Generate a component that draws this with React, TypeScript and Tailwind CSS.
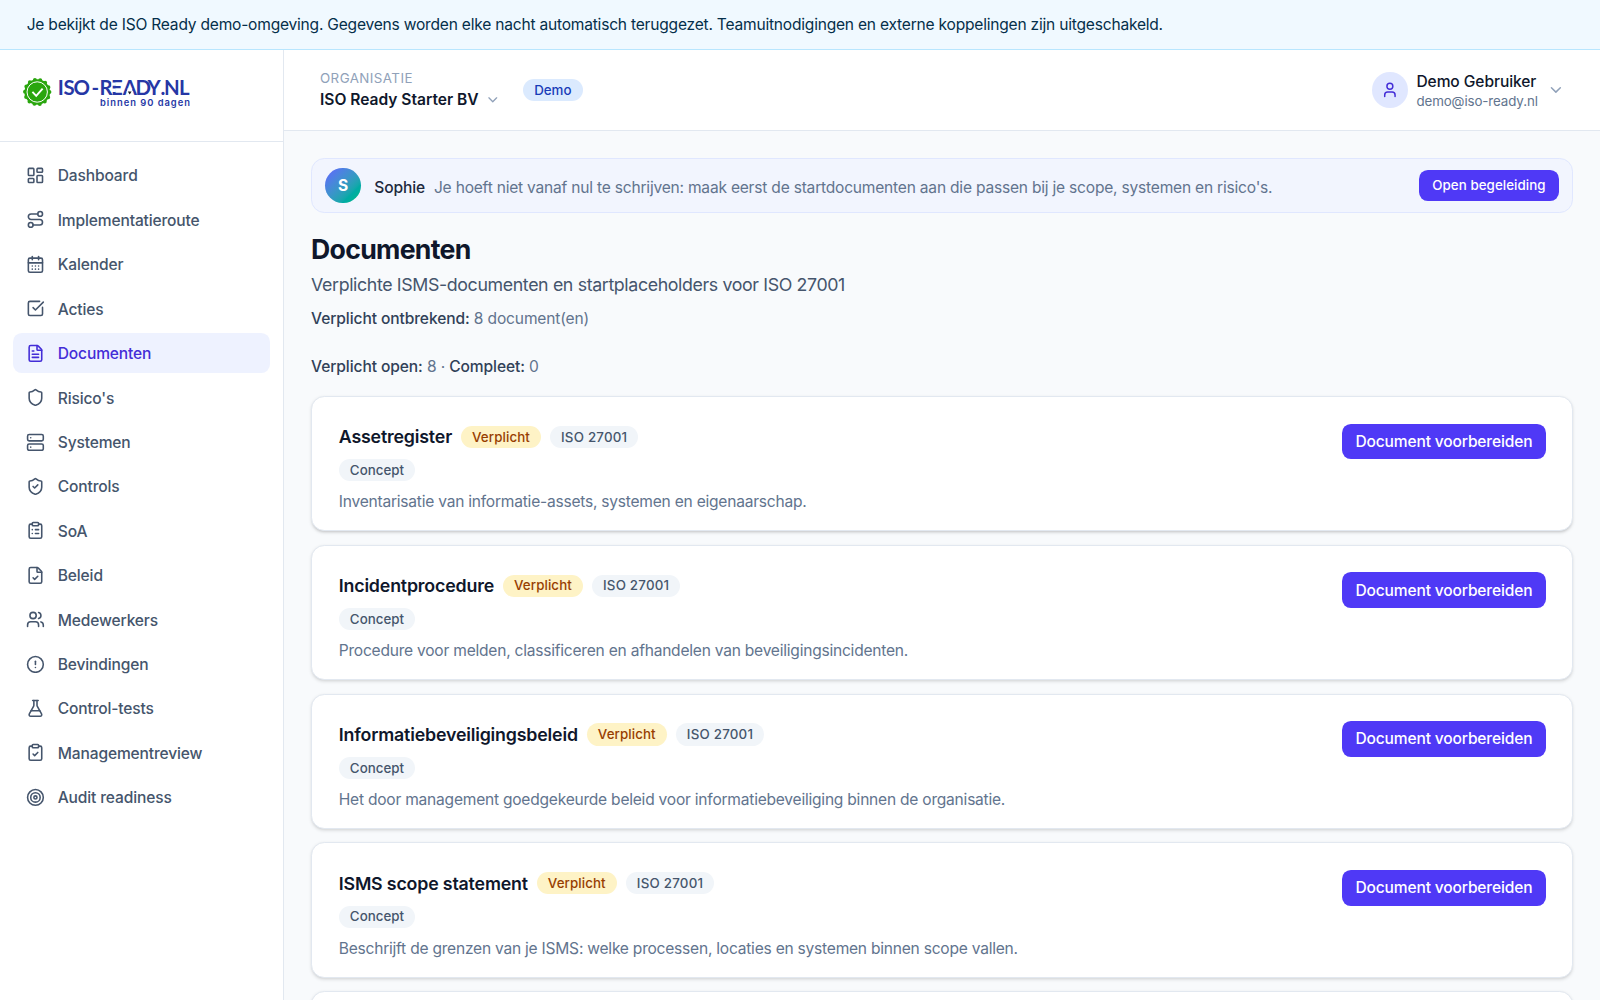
import React from 'react';
import {
  ChevronDown,
  CircleAlert,
  CalendarDays,
  ClipboardCheck,
  ClipboardList,
  FileCheck,
  FileText,
  FlaskConical,
  LayoutDashboard,
  Route,
  Server,
  Shield,
  ShieldCheck,
  SquareCheckBig,
  Target,
  User,
  Users,
} from 'lucide-react';

const navItems = [
  { label: 'Dashboard', icon: LayoutDashboard },
  { label: 'Implementatieroute', icon: Route },
  { label: 'Kalender', icon: CalendarDays },
  { label: 'Acties', icon: SquareCheckBig },
  { label: 'Documenten', icon: FileText, active: true },
  { label: "Risico's", icon: Shield },
  { label: 'Systemen', icon: Server },
  { label: 'Controls', icon: ShieldCheck },
  { label: 'SoA', icon: ClipboardList },
  { label: 'Beleid', icon: FileCheck },
  { label: 'Medewerkers', icon: Users },
  { label: 'Bevindingen', icon: CircleAlert },
  { label: 'Control-tests', icon: FlaskConical },
  { label: 'Managementreview', icon: ClipboardCheck },
  { label: 'Audit readiness', icon: Target },
];

const documents = [
  { title: 'Assetregister', description: 'Inventarisatie van informatie-assets, systemen en eigenaarschap.' },
  { title: 'Incidentprocedure', description: 'Procedure voor melden, classificeren en afhandelen van beveiligingsincidenten.' },
  { title: 'Informatiebeveiligingsbeleid', description: 'Het door management goedgekeurde beleid voor informatiebeveiliging binnen de organisatie.' },
  { title: 'ISMS scope statement', description: 'Beschrijft de grenzen van je ISMS: welke processen, locaties en systemen binnen scope vallen.' },
];

const Logo: React.FC = () => (
  <svg width="162" height="43.2" viewBox="0 -6 180 48" aria-label="ISO-READY.NL">
    {/* Seal */}
    <circle cx="15.2" cy="15" r="12.2" fill="none" stroke="#2aa60e" strokeWidth="4" strokeDasharray="0 5.475" strokeLinecap="round" />
    <circle cx="15.2" cy="15" r="12.8" fill="#2aa60e" />
    <circle cx="15.2" cy="15" r="10.2" fill="none" stroke="#fff" strokeWidth="1" />
    <path d="M10.4 14.8l3.8 4 6.4-7.2" fill="none" stroke="#fff" strokeWidth="1.9" />
    <text
      x="35.8 41.4 51.6 69.6 77.4 88.9 100.7 113.6 125.6 138.6 142 157"
      y="17.6"
      fontFamily="Lato"
      fontWeight="700"
      fontSize="20.4"
      fill="#2637a5"
    >
      ISO-READY.NL
    </text>
    {/* Open strokes of the E and A */}
    <path d="M89.5 5.6h4.4v3.1h-4.4zM89.5 11.4h4.4v3.6h-4.4z" fill="#fff" />
    <path d="M105.6 11.6h4.4l.9 3.6h-6.4z" fill="#fff" />
    <path d="M105.8 14.6h3.8l-1.9 2.8z" fill="#1c1c1c" />
    <text x="78" y="29.4" textLength="90" fontFamily="Inter" fontWeight="600" fontSize="9.4" fill="#2637a5">
      binnen 90 dagen
    </text>
  </svg>
);

const Badge: React.FC<{ className: string; children: React.ReactNode }> = ({ className, children }) => (
  <span className={`inline-flex h-5 items-center rounded-full px-2.5 pt-px text-xs font-medium ${className}`}>{children}</span>
);

const Sidebar: React.FC = () => (
  <aside className="w-64 shrink-0 border-r border-slate-200 bg-white">
    <div className="flex h-[83px] items-center border-b border-slate-200 px-5">
      <Logo />
    </div>
    <nav className="flex flex-col gap-1 p-3">
      {navItems.map(({ label, icon: Icon, active }) => (
        <a
          key={label}
          className={`flex h-9 items-center gap-[11.5px] rounded-lg pr-3 pl-[11.5px] text-sm font-medium tracking-[-0.12px] ${
            active ? 'bg-indigo-50 text-indigo-700' : 'text-slate-600'
          }`}
        >
          <Icon className="h-[17px] w-[17px]" />
          <span className="pt-0.5">{label}</span>
        </a>
      ))}
    </nav>
  </aside>
);

const Header: React.FC = () => (
  <header className="flex h-[73px] items-center justify-between border-b border-slate-200 bg-white px-6">
    <div className="flex items-center gap-3">
      <div className="px-2 pt-px">
        <div className="text-xs tracking-[0.4px] text-slate-400 uppercase">Organisatie</div>
        <div className="flex items-center gap-1.5 text-sm font-semibold text-slate-900">
          <span className="pt-px">ISO Ready Starter BV</span>
          <ChevronDown className="h-3.5 w-3.5 text-slate-400" />
        </div>
      </div>
      <Badge className="bg-blue-100 text-blue-800">Demo</Badge>
    </div>
    <div className="flex items-center gap-2 px-2">
      <span className="flex h-8 w-8 items-center justify-center rounded-full bg-indigo-100 text-indigo-700">
        <User className="h-4 w-4" />
      </span>
      <div className="pt-0.5">
        <div className="text-sm font-medium tracking-[-0.06px] text-slate-900">Demo Gebruiker</div>
        <div className="text-xs tracking-[-0.09px] text-slate-500">demo@iso-ready.nl</div>
      </div>
      <ChevronDown className="h-4 w-4 text-slate-400" />
    </div>
  </header>
);

const DocumentCard: React.FC<{ title: string; description: string }> = ({ title, description }) => (
  <div className="flex items-start justify-between rounded-xl border border-slate-200 bg-white px-6 pt-6 pb-[16.2px] shadow-sm">
    <div className="flex flex-col items-start">
      <div className="flex h-6 items-center gap-2">
        <h3 className="pt-px text-base font-semibold tracking-[-0.15px] text-slate-900">{title}</h3>
        <Badge className="bg-amber-100 tracking-[0.08px] text-amber-800">Verplicht</Badge>
        <Badge className="bg-slate-100 tracking-[0.2px] text-slate-600">ISO 27001</Badge>
      </div>
      <Badge className="mt-2 bg-slate-100 text-slate-600">Concept</Badge>
      <p className="mt-[9px] -mb-px text-sm tracking-[-0.2px] text-slate-500">{description}</p>
    </div>
    <button className="h-8 rounded-lg bg-indigo-600 px-3 pt-px text-sm font-medium tracking-[-0.13px] text-white">
      Document voorbereiden
    </button>
  </div>
);

export default function App() {
  return (
    <div className="flex h-[900px] flex-col overflow-hidden bg-slate-50 font-['Inter',sans-serif] [zoom:1.11111]">
      <div className="shrink-0 border-b border-sky-200 bg-sky-50 px-6 pt-[13px] pb-[11px] text-sm tracking-[-0.185px] text-sky-950">
        Je bekijkt de ISO Ready demo-omgeving. Gegevens worden elke nacht automatisch teruggezet. Teamuitnodigingen en externe
        koppelingen zijn uitgeschakeld.
      </div>

      <div className="flex min-h-0 flex-1">
        <Sidebar />
        <div className="min-w-0 flex-1">
          <Header />
          <main className="p-6">
            {/* Guidance bar */}
            <div className="mb-[17px] flex h-[50px] items-center gap-3 rounded-xl border border-indigo-100 bg-indigo-50/60 px-3">
              <span className="flex h-8 w-8 items-center justify-center rounded-full bg-linear-to-br from-indigo-500 to-emerald-500 pt-px text-sm font-bold text-white">
                S
              </span>
              <p className="flex-1 pt-1 text-sm tracking-[-0.185px] text-slate-500">
                <span className="mr-2 font-medium tracking-[-0.1px] text-slate-800">Sophie</span>
                Je hoeft niet vanaf nul te schrijven: maak eerst de startdocumenten aan die passen bij je scope, systemen en risico's.
              </p>
              <button className="h-7 rounded-lg bg-indigo-600 px-3 pt-px text-xs font-medium tracking-[0.06px] text-white">
                Open begeleiding
              </button>
            </div>

            <h1 className="text-2xl leading-8 font-bold tracking-[-0.65px] text-slate-900">Documenten</h1>
            <p className="mt-1 text-base tracking-[-0.33px] text-slate-600">
              Verplichte ISMS-documenten en startplaceholders voor ISO 27001
            </p>
            <p className="mt-2 text-sm tracking-[-0.13px] text-slate-500">
              <span className="font-medium tracking-[-0.08px] text-slate-700">Verplicht ontbrekend:</span> 8 document(en)
            </p>
            <p className="mt-6 text-sm tracking-[-0.13px] text-slate-500">
              <span className="font-medium tracking-[-0.08px] text-slate-700">Verplicht open:</span> 8 ·{' '}
              <span className="font-medium tracking-[-0.08px] text-slate-700">Compleet:</span> 0
            </p>

            <div className="mt-[15.5px] flex flex-col gap-3">
              {documents.map((doc) => (
                <DocumentCard key={doc.title} title={doc.title} description={doc.description} />
              ))}
              <div className="h-[122px] rounded-xl border border-slate-200 bg-white shadow-sm" />
            </div>
          </main>
        </div>
      </div>
    </div>
  );
}
